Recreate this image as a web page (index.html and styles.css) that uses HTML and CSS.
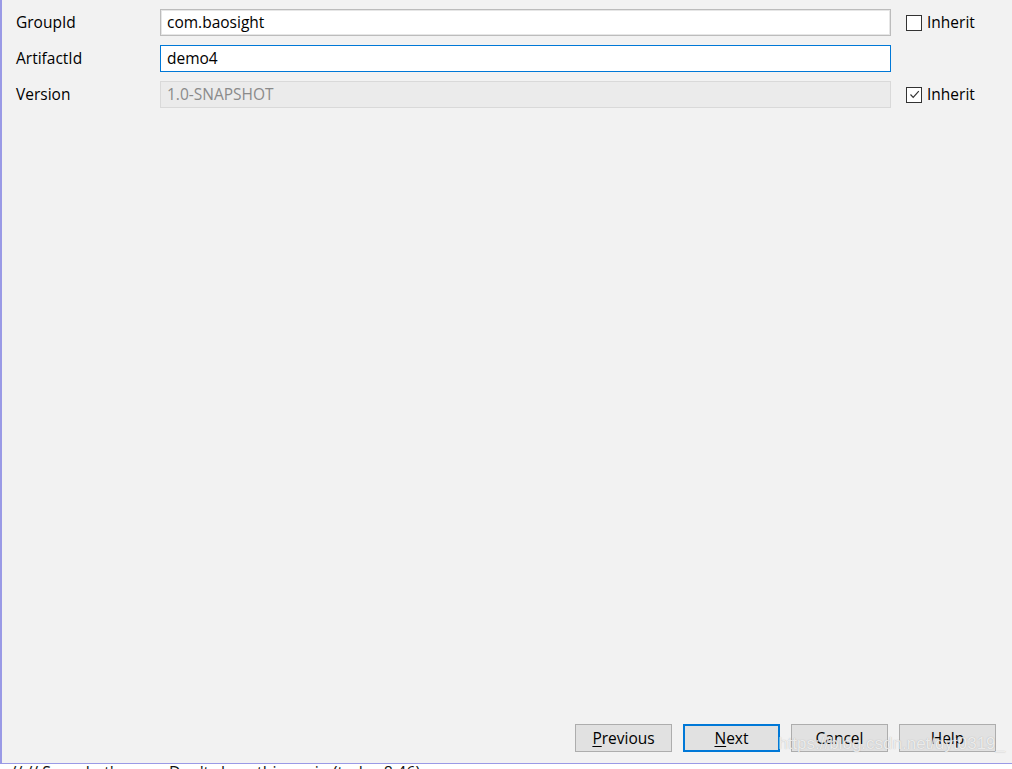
FILE: index.html
```html
<!DOCTYPE html>
<html lang="en">

<head>
  <meta charset="UTF-8">
  <title>New Project</title>
  <link rel="stylesheet" href="styles.css">
</head>

<body>
  <div class="dialog">
    <div class="form">
      <div class="row">
        <label class="label">GroupId</label>
        <div class="field">com.baosight</div>
        <div class="inherit"><span class="check"></span>Inherit</div>
      </div>
      <div class="row">
        <label class="label">ArtifactId</label>
        <div class="field focused">demo4</div>
        <div class="inherit"></div>
      </div>
      <div class="row">
        <label class="label">Version</label>
        <div class="field disabled">1.0-SNAPSHOT</div>
        <div class="inherit">
          <span class="check">
            <svg width="13" height="13" viewBox="0 0 13 13">
              <path d="M2.5 6.5 L5.2 9.3 L10.8 3.2" fill="none" stroke="#333" stroke-width="1.2" />
            </svg>
          </span>Inherit
        </div>
      </div>
    </div>

    <div class="buttons">
      <button class="btn"><u>P</u>revious</button>
      <button class="btn default"><u>N</u>ext</button>
      <button class="btn">Cancel</button>
      <button class="btn">Help</button>
      <span class="watermark">https://blog.csdn.net/dyt0319_</span>
    </div>
  </div>

  <div class="status">
    <div class="status-text">w // // See what's new &nbsp; Don't show this again (today 8:46)</div>
  </div>
</body>

</html>
```

FILE: styles.css
```css
* {
  margin: 0;
  padding: 0;
  box-sizing: border-box;
}

body {
  width: 1012px;
  height: 769px;
  overflow: hidden;
  background-color: #fff;
  font-family: "Open Sans", "Liberation Sans", sans-serif;
  font-size: 15.5px;
  color: #000;
}

.dialog {
  height: 764px;
  background-color: #f2f2f2;
  border-left: 2px solid #9a9ae6;
  border-bottom: 1px solid #9a9ae6;
  display: flex;
  flex-direction: column;
  justify-content: space-between;
  position: relative;
}

.form {
  padding-top: 9px;
  display: flex;
  flex-direction: column;
  gap: 9px;
}

.row {
  display: grid;
  grid-template-columns: 144px 731px 1fr;
  align-items: center;
  padding-left: 14px;
  height: 27px;
}

.label {
  line-height: 27px;
}

.field {
  height: 27px;
  background-color: #fff;
  border: 1px solid #bcbcbc;
  box-shadow: inset 0 0 0 1px #e6e6e6;
  padding-left: 6px;
  line-height: 24px;
}

.field.focused {
  border-color: #0078d7;
  box-shadow: none;
}

.field.disabled {
  background-color: #ebebeb;
  border-color: #d9d9d9;
  box-shadow: none;
  color: #8a8a8a;
}

.inherit {
  display: flex;
  align-items: center;
  padding-left: 15px;
  line-height: 27px;
}

.check {
  width: 16px;
  height: 16px;
  border: 1px solid #333;
  background-color: #fff;
  margin-right: 5px;
  display: flex;
  align-items: center;
  justify-content: center;
}

.buttons {
  display: flex;
  justify-content: flex-end;
  gap: 11px;
  padding: 0 16px 11px 0;
  position: relative;
}

.btn {
  width: 97px;
  height: 28px;
  font-family: inherit;
  font-size: 15.5px;
  color: #000;
  background-color: #e1e1e1;
  border: 1px solid #adadad;
}

.btn.default {
  border: 2px solid #0078d7;
}

.btn u {
  text-decoration-thickness: 1px;
  text-underline-offset: 2px;
}

.watermark {
  position: absolute;
  right: 7px;
  top: 10px;
  font-family: "Liberation Sans", sans-serif;
  font-size: 17px;
  color: rgba(255, 255, 255, 0.75);
  text-shadow: 0 0 1px rgba(130, 130, 130, 0.6);
  pointer-events: none;
}

.status {
  height: 5px;
  overflow: hidden;
  background-color: #fff;
}

.status-text {
  margin-top: -2px;
  margin-left: -6px;
  font-size: 16px;
  line-height: 20px;
  white-space: nowrap;
  color: #111;
}
```
